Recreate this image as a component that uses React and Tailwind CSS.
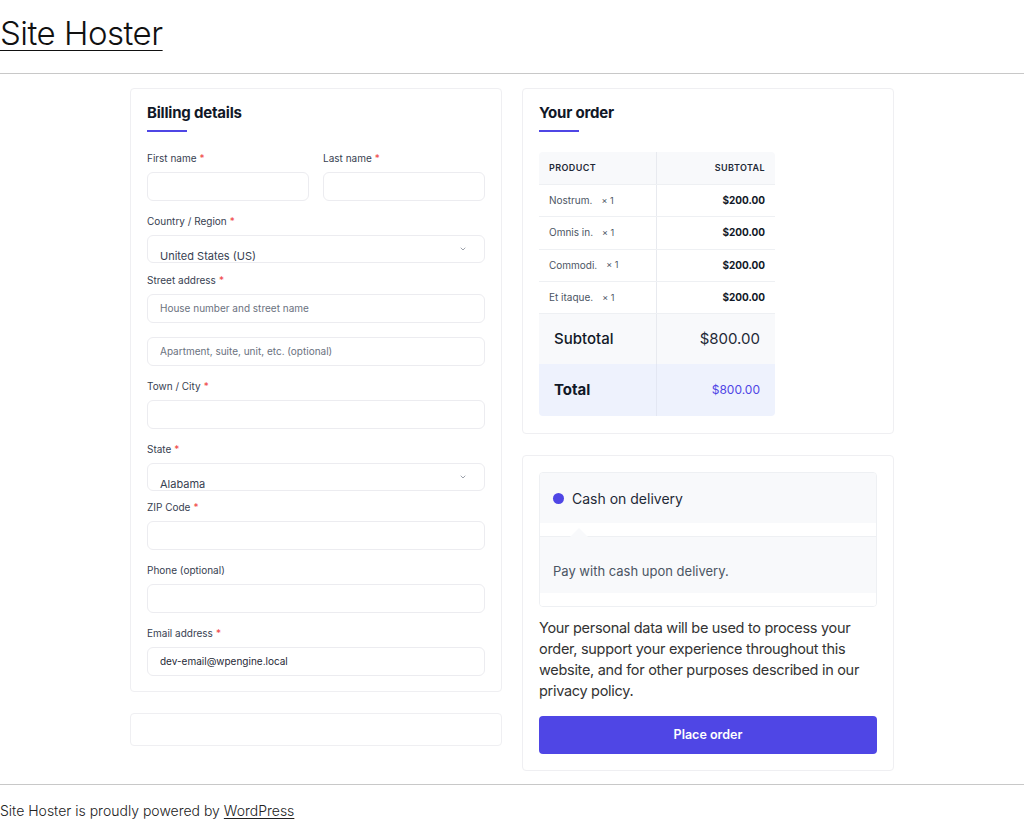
import { ChevronDown } from 'lucide-react';

const font = { fontFamily: 'Inter, "Noto Sans", sans-serif' };

function Label({ children, required, className = '' }) {
  return (
    <div className={`text-[10px] leading-[13px] text-[#374151] ${className}`}>
      {children}
      {required && <span className="text-[#ef4444] ml-[3px]">*</span>}
    </div>
  );
}

function Field({ placeholder, value, className = '' }) {
  return (
    <input
      readOnly
      placeholder={placeholder}
      defaultValue={value}
      className={`block w-full h-[29px] rounded-md border border-[#ececf0] bg-white px-3 text-[10px] text-[#1f2937] placeholder:text-[#6b7280] outline-none ${className}`}
    />
  );
}

function FakeSelect({ value, className = '' }) {
  return (
    <div className={`relative h-[28px] w-full overflow-hidden rounded-md border border-[#ececf0] bg-white ${className}`}>
      <div className="pl-3 pt-[13px] text-[11px] leading-[14px] text-[#374151]">{value}</div>
      <ChevronDown className="absolute right-[17px] top-[9px] h-[8px] w-[8px] text-[#6b7280]" strokeWidth={2} />
    </div>
  );
}

function Heading({ children }) {
  return (
    <div>
      <h2 className="text-[15px] leading-5 font-bold text-[#111827] tracking-[-0.2px]">{children}</h2>
      <div className="mt-[7px] h-[2px] w-10 bg-[#4f46e5]" />
    </div>
  );
}

const items = ['Nostrum.', 'Omnis in.', 'Commodi.', 'Et itaque.'];

export default function App() {
  return (
    <div className="min-h-[836px] bg-white text-[#1f2937]" style={font}>
      <header className="h-[74px] border-b border-[#c8c8c8] pt-[13px]">
        <a href="#" className="text-[33px] leading-10 font-light text-[#111] underline decoration-1 underline-offset-[5px] tracking-[-0.5px]">
          Site Hoster
        </a>
      </header>

      <main className="mx-auto mt-[14px] grid w-[764px] grid-cols-2 gap-x-[20px] items-start">
        <div className="flex flex-col gap-[21px]">
          <section className="rounded border border-[#efeff2] px-4 pt-[14px] pb-[15px]">
            <Heading>Billing details</Heading>

            <div className="mt-[20px] grid grid-cols-2 gap-x-[14px]">
              <div>
                <Label required>First name</Label>
                <Field className="mt-[6.5px]" />
              </div>
              <div>
                <Label required>Last name</Label>
                <Field className="mt-[6.5px]" />
              </div>
            </div>

            <Label required className="mt-[14.5px]">Country / Region</Label>
            <FakeSelect value="United States (US)" className="mt-[6.5px]" />

            <Label required className="mt-[11.5px]">Street address</Label>
            <Field className="mt-[6.5px]" placeholder="House number and street name" />
            <Field className="mt-[14px]" placeholder="Apartment, suite, unit, etc. (optional)" />

            <Label required className="mt-[14.5px]">Town / City</Label>
            <Field className="mt-[6.5px]" />

            <Label required className="mt-[14.5px]">State</Label>
            <FakeSelect value="Alabama" className="mt-[6.5px]" />

            <Label required className="mt-[10.5px]">ZIP Code</Label>
            <Field className="mt-[6.5px]" />

            <Label className="mt-[14.5px]">Phone (optional)</Label>
            <Field className="mt-[6.5px]" />

            <Label required className="mt-[14.5px]">Email address</Label>
            <Field className="mt-[6.5px]" value="dev-email@wpengine.local" />
          </section>

          <section className="h-[33px] rounded border border-[#efeff2]" />
        </div>

        <div className="flex flex-col gap-[21px]">
          <section className="rounded border border-[#efeff2] px-4 pt-[14px] pb-[17px]">
            <Heading>Your order</Heading>

            <div className="mt-[20px] w-[236px] overflow-hidden rounded">
              <div className="grid grid-cols-[118px_118px] h-[32px] bg-[#f8f9fb] text-[9px] font-semibold tracking-[0.4px] text-[#1f2937]">
                <div className="flex items-center border-r border-[#e8eaef] pl-[10px]">PRODUCT</div>
                <div className="flex items-center justify-end pr-[10px]">SUBTOTAL</div>
              </div>
              {items.map((name) => (
                <div key={name} className="grid grid-cols-[118px_118px] h-[32.25px] border-t border-[#eef0f3] text-[10px]">
                  <div className="flex items-center border-r border-[#e8eaef] pl-[10px] text-[#4b5563]">
                    {name}
                    <span className="ml-[9px] text-[9px] text-[#4b5563]">× 1</span>
                  </div>
                  <div className="flex items-center justify-end pr-[10px] font-bold text-[#111827]">$200.00</div>
                </div>
              ))}
              <div className="grid grid-cols-[118px_118px] h-[51px] bg-[#f8f9fb] border-t border-[#eef0f3]">
                <div className="flex items-center border-r border-[#e8eaef] pl-[15px] text-[15px] font-medium text-[#111827]">Subtotal</div>
                <div className="flex items-center justify-end pr-[15px] text-[15px] text-[#1f2937]">$800.00</div>
              </div>
              <div className="grid grid-cols-[118px_118px] h-[52px] bg-[#eef2fd]">
                <div className="flex items-center border-r border-[#e3e7f3] pl-[15px] text-[15px] font-bold text-[#111827]">Total</div>
                <div className="flex items-center justify-end pr-[15px] text-[12px] text-[#4f46e5]">$800.00</div>
              </div>
            </div>
          </section>

          <section className="rounded border border-[#efeff2] px-4 pt-4 pb-4">
            <div className="overflow-hidden rounded border border-[#eef0f3]">
              <div className="flex h-[50px] items-center gap-[8px] bg-[#f8f9fb] pl-[13px]">
                <span className="h-[11px] w-[11px] rounded-full bg-[#4f46e5]" />
                <span className="text-[14px] text-[#1f2937]">Cash on delivery</span>
              </div>
              <div className="relative h-[14px] border-b border-[#eef0f3] bg-white">
                <div className="absolute left-[30px] top-[5px] h-0 w-0 border-x-[9px] border-b-[9px] border-x-transparent border-b-[#f8f9fb]" />
              </div>
              <div className="flex h-[56px] items-center bg-[#f8f9fb] pl-[13px] pt-[14px] text-[13px] text-[#4b5563]">
                Pay with cash upon delivery.
              </div>
              <div className="h-[13px] bg-white" />
            </div>

            <p className="mt-[10px] text-[14.5px] leading-[21px] text-[#333] tracking-[-0.3px]">
              Your personal data will be used to process your order, support your experience throughout this website, and for other purposes described in our privacy policy.
            </p>

            <button className="mt-[15px] h-[38px] w-full rounded bg-[#4f46e5] text-[12.5px] font-semibold text-white">
              Place order
            </button>
          </section>
        </div>
      </main>

      <footer className="mt-[13px] border-t border-[#c8c8c8] pt-[16px] pb-4">
        <p className="text-[14px] leading-5 font-light text-[#222]">
          Site Hoster is proudly powered by <a href="#" className="underline underline-offset-2">WordPress</a>
        </p>
      </footer>
    </div>
  );
}
